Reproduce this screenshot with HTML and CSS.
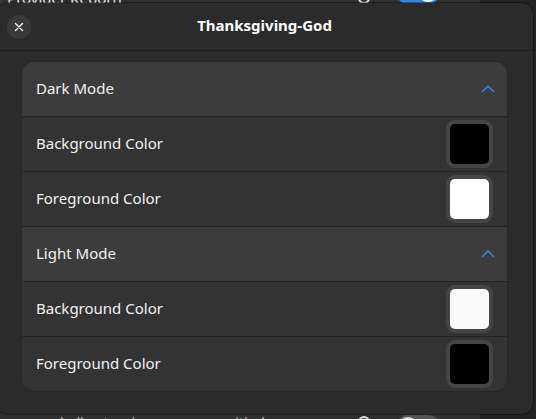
FILE: index.html
```html
<!DOCTYPE html>
<html>
<head>
<meta charset="utf-8">
<link rel="stylesheet" href="styles.css">
</head>
<body>
<div class="screen">
  <div class="bgwin">
    <div class="bgrow bgrow-top">
      <span class="bgtext">r Provider Reborn</span>
      <span class="bgicon"></span>
      <span class="bgswitch on"><span class="knob"></span></span>
    </div>
    <div class="bgrow bgrow-bottom">
      <span class="bgtext sub">gnome-shell-extensions.gcampax.github.com</span>
      <span class="bgicon"></span>
      <span class="bgswitch"><span class="knob"></span></span>
    </div>
  </div>

  <div class="dialog">
    <div class="header">
      <div class="header-start">
        <button class="close" aria-label="Close">
          <svg width="10" height="10" viewBox="0 0 10 10"><path d="M1.5 1.5 L8.5 8.5 M8.5 1.5 L1.5 8.5" stroke="#ffffff" stroke-width="1.4" stroke-linecap="round"/></svg>
        </button>
      </div>
      <div class="title">Thanksgiving-God</div>
      <div class="header-end"></div>
    </div>
    <div class="content">
      <div class="list">
        <div class="row expander">
          <span class="label">Dark Mode</span>
          <svg class="chevron" width="14" height="8" viewBox="0 0 14 8"><path d="M1 7 L7 1 L13 7" fill="none" stroke="#3584e4" stroke-width="1.5"/></svg>
        </div>
        <div class="row">
          <span class="label">Background Color</span>
          <span class="swatch-btn"><span class="swatch black"></span></span>
        </div>
        <div class="row">
          <span class="label">Foreground Color</span>
          <span class="swatch-btn"><span class="swatch white"></span></span>
        </div>
        <div class="row expander">
          <span class="label">Light Mode</span>
          <svg class="chevron" width="14" height="8" viewBox="0 0 14 8"><path d="M1 7 L7 1 L13 7" fill="none" stroke="#3584e4" stroke-width="1.5"/></svg>
        </div>
        <div class="row">
          <span class="label">Background Color</span>
          <span class="swatch-btn"><span class="swatch offwhite"></span></span>
        </div>
        <div class="row">
          <span class="label">Foreground Color</span>
          <span class="swatch-btn"><span class="swatch black"></span></span>
        </div>
      </div>
    </div>
  </div>
</div>
</body>
</html>
```

FILE: styles.css
```css
* { box-sizing: border-box; }
html, body { margin: 0; padding: 0; }
body {
  background: #222222;
  font-family: "Noto Sans", "Open Sans", sans-serif;
  color: #ffffff;
  width: 536px;
  height: 419px;
  overflow: hidden;
}
.screen {
  position: relative;
  width: 536px;
  height: 419px;
  overflow: hidden;
}
.bgwin {
  width: 480px;
  height: 419px;
  background: #303030;
  display: flex;
  flex-direction: column;
  justify-content: space-between;
}
.bgrow {
  display: flex;
  height: 26px;
  padding-right: 40px;
}
.bgrow-top { margin-top: -22px; align-items: flex-end; }
.bgrow-bottom { margin-bottom: -22px; align-items: flex-start; }
.bgtext {
  font-size: 15px;
  line-height: 15px;
  color: #e8e8e8;
  flex: 1;
  white-space: nowrap;
  margin-left: -3px;
  margin-bottom: -2px;
}
.bgtext.sub {
  color: #b8b8b8;
  font-size: 14px;
  line-height: 14px;
  margin-left: 2px;
  margin-bottom: 0;
  margin-top: 1px;
}
.bgicon {
  width: 12px;
  height: 12px;
  border: 2px solid #dddddd;
  border-radius: 50%;
  margin-right: 26px;
}
.bgrow-top .bgicon { margin-bottom: 0; }
.bgrow-bottom .bgicon { margin-top: 1px; }
.bgswitch {
  width: 44px;
  height: 24px;
  border-radius: 12px;
  background: #545454;
  display: flex;
  align-items: center;
  padding: 0 2px;
}
.bgswitch.on { background: #3584e4; justify-content: flex-end; }
.knob {
  width: 20px;
  height: 20px;
  border-radius: 50%;
  background: #d0d0d0;
}
.bgswitch.on .knob { background: #ffffff; }

.dialog {
  position: absolute;
  left: -4px;
  top: 3px;
  width: 537px;
  height: 411px;
  background: #2b2b2b;
  border-radius: 12px;
  box-shadow: 0 0 0 1px rgba(0,0,0,0.35);
  overflow: hidden;
  display: flex;
  flex-direction: column;
}
.header {
  height: 48px;
  flex: none;
  border-bottom: 1px solid #1f1f1f;
  display: grid;
  grid-template-columns: 1fr auto 1fr;
  align-items: center;
  background: #2b2b2b;
}
.header-start { padding-left: 11px; display: flex; align-items: center; }
.close {
  width: 24px;
  height: 24px;
  border-radius: 50%;
  background: #3a3a3a;
  border: none;
  padding: 0;
  display: flex;
  align-items: center;
  justify-content: center;
  margin-top: 1px;
}
.title {
  font-weight: 700;
  font-size: 15px;
  line-height: 20px;
  color: #ffffff;
  margin-bottom: 3px;
}
.content {
  padding: 11px 26px 0 26px;
}
.list {
  background: #333333;
  border-radius: 12px;
  overflow: hidden;
  box-shadow: 0 0 0 1px rgba(0,0,0,0.08);
}
.row {
  height: 55px;
  display: flex;
  align-items: center;
  justify-content: space-between;
  padding: 0 14px;
  border-top: 1px solid #242424;
}
.row:first-child { height: 54px; border-top: none; }
.row.expander { background: #3c3c3c; }
.label {
  font-size: 15px;
  line-height: 20px;
  color: #f2f2f2;
  margin-bottom: 3px;
}
.chevron { margin-right: -2px; }
.swatch-btn {
  width: 47px;
  height: 48px;
  border-radius: 9px;
  background: #454545;
  padding: 4px;
  display: flex;
}
.swatch {
  flex: 1;
  border-radius: 5px;
}
.swatch.black { background: #000000; }
.swatch.white { background: #ffffff; }
.swatch.offwhite { background: #fafafa; }
```
